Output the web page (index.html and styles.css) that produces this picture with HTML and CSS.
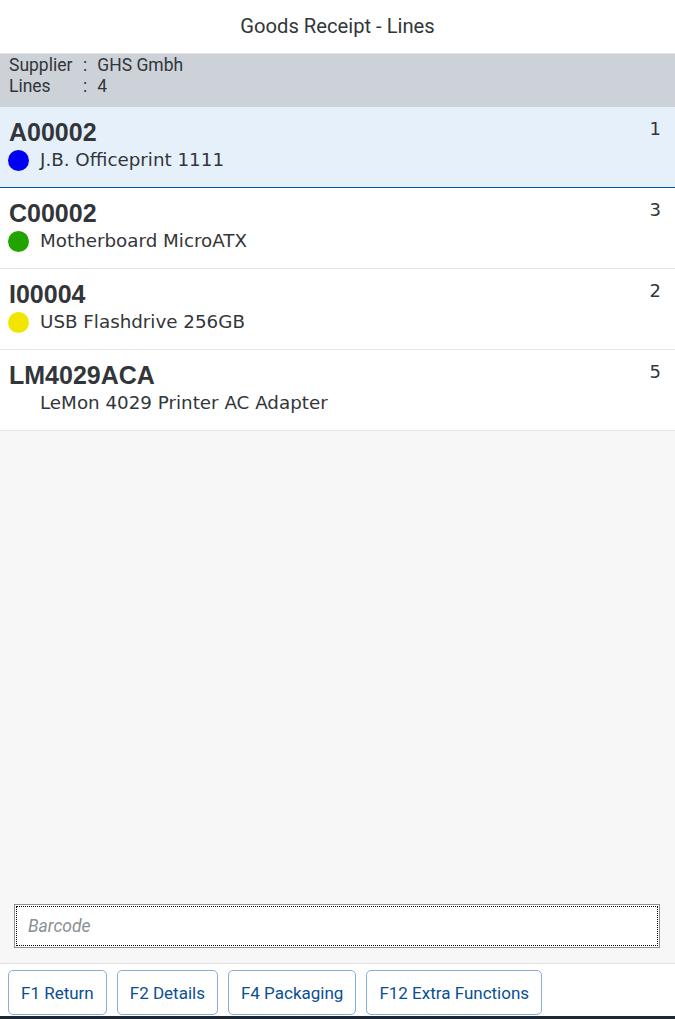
FILE: index.html
```html
<!DOCTYPE html>
<html>
<head>
	<meta charset="UTF-8">
	<title>Goods Receipt - Lines</title>
	<link rel="stylesheet" href="styles.css">
</head>
<body>
	<div class="app">
		<div class="header">Goods Receipt - Lines</div>

		<div class="info">
			<div class="info-row"><span class="info-label">Supplier</span><span class="info-sep">:</span><span class="info-value">GHS Gmbh</span></div>
			<div class="info-row"><span class="info-label">Lines</span><span class="info-sep">:</span><span class="info-value">4</span></div>
		</div>

		<div class="main">
			<ul class="lines">
				<li class="line selected">
					<div class="line-body">
						<div class="line-code">A00002</div>
						<div class="line-desc"><span class="dot blue"></span>J.B. Officeprint 1111</div>
					</div>
					<div class="line-qty">1</div>
				</li>
				<li class="line">
					<div class="line-body">
						<div class="line-code">C00002</div>
						<div class="line-desc"><span class="dot green"></span>Motherboard MicroATX</div>
					</div>
					<div class="line-qty">3</div>
				</li>
				<li class="line">
					<div class="line-body">
						<div class="line-code">I00004</div>
						<div class="line-desc"><span class="dot yellow"></span>USB Flashdrive 256GB</div>
					</div>
					<div class="line-qty">2</div>
				</li>
				<li class="line">
					<div class="line-body">
						<div class="line-code">LM4029ACA</div>
						<div class="line-desc"><span class="dot"></span>LeMon 4029 Printer AC Adapter</div>
					</div>
					<div class="line-qty">5</div>
				</li>
			</ul>

			<div class="scan">
				<input type="text" class="barcode" placeholder="Barcode" autofocus>
			</div>
		</div>

		<div class="footer">
			<button class="fkey">F1 Return</button>
			<button class="fkey">F2 Details</button>
			<button class="fkey">F4 Packaging</button>
			<button class="fkey">F12 Extra Functions</button>
		</div>
	</div>
</body>
</html>
```

FILE: styles.css
```css
html, body {
	height: 100%;
}

body {
	margin: 0;
	background-color: #f7f7f7;
	font-family: Roboto, "Liberation Sans", sans-serif;
	color: #32363a;
}

.app {
	display: flex;
	flex-direction: column;
	height: 100vh;
}

.header {
	height: 53px;
	line-height: 53px;
	background-color: #fff;
	border-bottom: 1px solid #e2e2e2;
	text-align: center;
	font-size: 20.2px;
}

.info {
	height: 52px;
	padding: 1px 9px 0;
	background-color: #cdd1d8;
	font-size: 17.5px;
	line-height: 21px;
}

.info-row {
	display: flex;
}

.info-label {
	width: 66px;
}

.info-sep {
	margin: 0 8px;
}

.info-value {
	margin-left: 2px;
}

.main {
	flex: 1;
	display: flex;
	flex-direction: column;
}

.lines {
	list-style: none;
	margin: 0;
	padding: 0;
}

.line {
	display: flex;
	justify-content: space-between;
	box-sizing: border-box;
	height: 81px;
	padding: 10px 14px 0 8px;
	margin: 0;
	background-color: #fff;
	border-bottom: 1px solid #e5e5e5;
}

.line.selected {
	background-color: #e5f0fa;
	border-bottom-color: #0854a0;
}

.line-code {
	padding-left: 1px;
	font-family: "Liberation Sans", Arial, sans-serif;
	font-size: 25px;
	font-weight: bold;
	line-height: 30px;
}

.line-desc {
	display: flex;
	align-items: center;
	font-family: "DejaVu Sans", sans-serif;
	font-size: 18.3px;
	line-height: 26px;
}

.dot {
	display: inline-block;
	width: 21px;
	height: 21px;
	margin-right: 11px;
	border-radius: 50%;
}

.dot.blue {
	background-color: #0000f5;
}

.dot.green {
	background-color: #21a300;
}

.dot.yellow {
	background-color: #f2e600;
}

.line-qty {
	font-family: "DejaVu Sans", sans-serif;
	font-size: 18px;
	line-height: 24px;
}

.scan {
	margin-top: auto;
	padding: 0 15px 15px 14px;
}

.barcode {
	display: block;
	box-sizing: border-box;
	width: 100%;
	height: 44px;
	padding: 0 13px;
	border: 1px solid #89919a;
	border-radius: 0;
	outline: 1px dotted #000;
	outline-offset: -3px;
	background-color: #fff;
	font-family: Roboto, sans-serif;
	font-size: 17.5px;
	color: #32363a;
}

.barcode::placeholder {
	color: #8a8f95;
	font-style: italic;
}

.footer {
	display: flex;
	gap: 10px;
	padding: 6px 8px 1px;
	background-color: #fff;
	border-top: 1px solid #e2e2e2;
	border-bottom: 3px solid #1d2733;
}

.fkey {
	height: 45px;
	padding: 0 12px;
	background-color: #fff;
	border: 1px solid #85ade0;
	border-radius: 5px;
	color: #0a4f93;
	font-family: Roboto, sans-serif;
	font-size: 17px;
}
```
